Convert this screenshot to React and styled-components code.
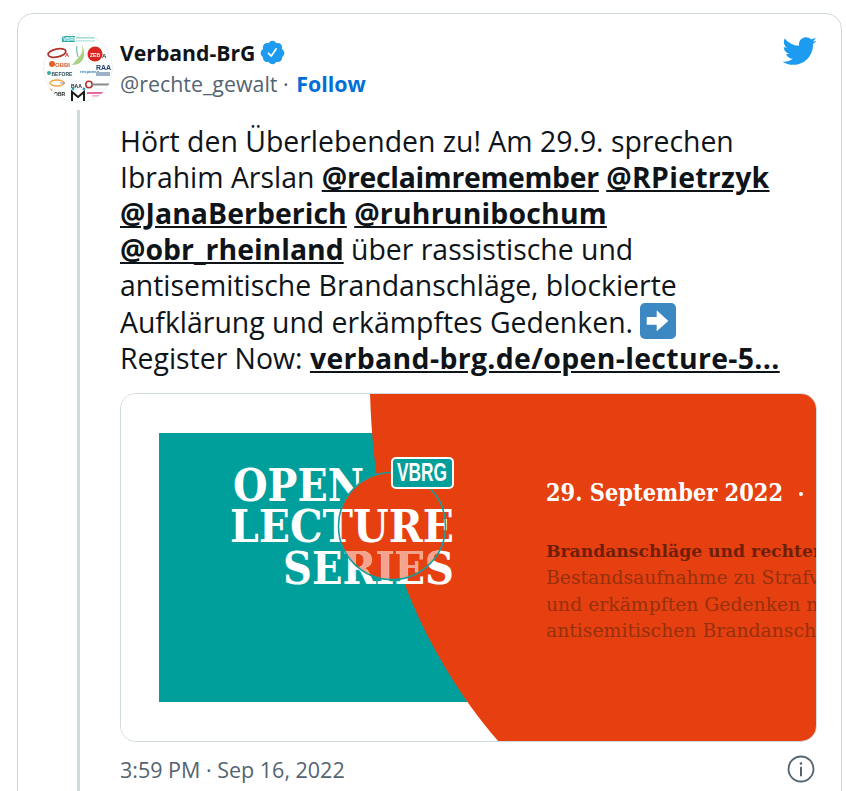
import React from "react";
import styled, { createGlobalStyle } from "styled-components";

const Global = createGlobalStyle`
  html, body { margin: 0; padding: 0; background: #fff; }
  body { width: 846px; height: 791px; overflow: hidden; }
`;

const Card = styled.article`
  box-sizing: border-box;
  width: 825px;
  margin: 13px 0 0 17px;
  height: 800px;
  border: 1px solid #cfd9de;
  border-radius: 16px;
  padding: 19px 24px 0 25px;
  font-family: "Open Sans", "Noto Sans", sans-serif;
  color: #0f1419;
  background: #fff;
`;

const Header = styled.header`
  display: flex;
  align-items: flex-start;
  height: 70px;
`;

const AvatarSvg = styled.svg`
  width: 70px;
  height: 70px;
  flex: none;
  margin-right: 7px;
  filter: blur(0.35px);
`;

const Identity = styled.div`
  flex: 1;
  padding-top: 5px;
`;

const NameRow = styled.div`
  display: flex;
  align-items: center;
  height: 29px;
  gap: 4px;
`;

const Name = styled.span`
  font-size: 21.2px;
  font-weight: 700;
`;

const HandleRow = styled.div`
  font-size: 21.4px;
  line-height: 30px;
  color: #536471;
  margin-top: 2px;
`;

const Follow = styled.span`
  color: #006fd6;
  font-weight: 700;
  margin-left: 2px;
`;

const Bird = styled.svg`
  width: 36px;
  height: 36px;
  fill: #1d9bf0;
  flex: none;
`;

const Body = styled.div`
  display: flex;
`;

const ThreadRail = styled.div`
  flex: none;
  width: 3px;
  margin: 7px 40px 0 34px;
  height: 690px;
  background: #cfd9de;
`;

const Content = styled.div`
  width: 697px;
  padding-top: 20px;
`;

const TweetText = styled.p`
  margin: 0 0 17px;
  font-size: 28.4px;
  line-height: 36px;
  white-space: nowrap;
`;

const Mention = styled.span`
  font-weight: 700;
  letter-spacing: ${(p) => p.$track || "0"};
  text-decoration: underline;
`;

const Emoji = styled.svg`
  width: 36px;
  height: 36px;
  vertical-align: -6px;
`;

const Media = styled.div`
  box-sizing: border-box;
  width: 697px;
  height: 349px;
  border: 1px solid #cfd9de;
  border-radius: 16px;
  overflow: hidden;
  background: #fff;
`;

const Poster = styled.svg`
  display: block;
  width: 697px;
  height: 349px;
  margin: -1px;
`;

const PosterTitle = styled.text`
  font-family: "DejaVu Serif", serif;
  font-weight: 700;
  font-size: 45px;
  fill: ${(p) => p.$fill || "#fff"};
`;

const PosterBadgeText = styled.text`
  font-family: "Liberation Sans", sans-serif;
  font-weight: 700;
  font-size: 25px;
  fill: #fff;
`;

const PosterDate = styled.text`
  font-family: "DejaVu Serif", serif;
  font-weight: 700;
  font-size: 24px;
  fill: #fff;
`;

const PosterLead = styled.text`
  font-family: "DejaVu Serif", serif;
  font-weight: 700;
  font-size: 17.2px;
  fill: #6f1f07;
`;

const PosterLine = styled.text`
  font-family: "DejaVu Serif", serif;
  font-weight: 400;
  font-size: 18.8px;
  fill: #96300e;
`;

const Footer = styled.footer`
  display: flex;
  align-items: center;
  justify-content: space-between;
  height: 30px;
  margin-top: 12px;
  color: #536471;
  font-size: 21.5px;
`;

const InfoIcon = styled.svg`
  width: 30px;
  height: 30px;
  margin-right: 1px;
  fill: none;
  stroke: #536471;
  flex: none;
`;

const Badge = () => (
  <svg width="27" height="27" viewBox="0 0 24 24" fill="#1d9bf0">
    <path d="M22.5 12.5c0-1.58-.875-2.95-2.148-3.6.154-.435.238-.905.238-1.4 0-2.21-1.71-3.998-3.818-3.998-.47 0-.92.084-1.336.25C14.818 2.415 13.51 1.5 12 1.5s-2.816.917-3.437 2.25c-.415-.165-.866-.25-1.336-.25-2.11 0-3.818 1.79-3.818 4 0 .494.083.964.237 1.4-1.272.65-2.147 2.018-2.147 3.6 0 1.495.782 2.798 1.942 3.486-.02.17-.032.34-.032.514 0 2.21 1.708 4 3.818 4 .47 0 .92-.086 1.335-.25.62 1.334 1.926 2.25 3.437 2.25 1.512 0 2.818-.916 3.437-2.25.415.163.865.248 1.336.248 2.11 0 3.818-1.79 3.818-4 0-.174-.012-.344-.033-.513 1.158-.687 1.943-1.99 1.943-3.484zm-6.616-3.334l-4.334 6.5c-.145.217-.382.334-.625.334-.143 0-.288-.04-.416-.126l-.115-.094-2.415-2.415c-.293-.293-.293-.768 0-1.06s.768-.294 1.06 0l1.77 1.767 3.825-5.74c.23-.345.696-.436 1.04-.207.346.23.44.696.21 1.04z" />
  </svg>
);

const Avatar = () => (
  <AvatarSvg viewBox="3 3 70 70">
    <defs>
      <clipPath id="av"><circle cx="38" cy="38" r="35" /></clipPath>
    </defs>
    <g clipPath="url(#av)" fontFamily="Liberation Sans, sans-serif" fontWeight="700">
      <rect x="3" y="3" width="70" height="70" fill="#fff" />
      <circle cx="38" cy="38" r="34.5" fill="#fdfefe" stroke="#e6f1ef" />
      <rect x="22" y="6" width="13" height="6" fill="#37a99f" />
      <text x="23" y="11" fontSize="5" fill="#fff">VBRG</text>
      <rect x="36" y="7" width="19" height="1.6" fill="#a8dcd6" />
      <rect x="36" y="10" width="19" height="1.6" fill="#c5e8e3" />
      <ellipse cx="17" cy="23" rx="9" ry="4" fill="none" stroke="#b1342f" strokeWidth="1.8" transform="rotate(-12 17 23)" />
      <text x="25" y="27" fontSize="5.5" fill="#b33">A</text>
      <path d="M42 14c1 8 0 10-4 14l-6 7c6 0 11-3 12-9 .5-3-.5-8-2-12z" fill="#a9d281" />
      <path d="M37 16c-1 4 0 7 1 11" stroke="#72bfa6" fill="none" strokeWidth="1.2" />
      <circle cx="55" cy="24" r="7.5" fill="#d9241f" />
      <text x="50" y="27" fontSize="5" fill="#fff">ZEB</text>
      <text x="62" y="27.5" fontSize="6" fill="#333">A</text>
      <circle cx="12" cy="34" r="3" fill="#e3622a" />
      <text x="15" y="37" fontSize="6" fill="#d85d2c">OBBI</text>
      <circle cx="9" cy="43" r="2" fill="#37a99f" />
      <text x="11.5" y="45.5" fontSize="5" fill="#2f4c58">BEFORE</text>
      <text x="40" y="42.5" fontSize="4.3" fill="#2e83b4">response.</text>
      <text x="56" y="40" fontSize="7" fill="#23406e">RAA</text>
      <rect x="56" y="42" width="14" height="4" fill="#9db1c7" />
      <ellipse cx="17" cy="53" rx="7" ry="3" fill="none" stroke="#eda64c" strokeWidth="1.5" />
      <text x="20" y="54" fontSize="3" fill="#999">rme</text>
      <text x="31" y="58" fontSize="5" fill="#222">BAA</text>
      <circle cx="49" cy="54.5" r="3.2" fill="none" stroke="#b8352f" strokeWidth="1.6" />
      <rect x="52" y="53.5" width="18" height="2" fill="#8a8a8a" />
      <text x="14" y="66" fontSize="5" fill="#222">OBR</text>
      <circle cx="11" cy="60" r="1.5" fill="#f0a14a" />
      <path d="M32 71v-9l6 5 6-5v9" fill="none" stroke="#1a1a1a" strokeWidth="2" />
      <circle cx="33" cy="59" r="1.4" fill="#2d9cc7" />
      <circle cx="44" cy="59" r="1.4" fill="#2d9cc7" />
      <rect x="47" y="62" width="18" height="2" fill="#e46aa6" />
      <rect x="52" y="65" width="8" height="1.6" fill="#f0a9cb" />
    </g>
  </AvatarSvg>
);

const ArrowEmoji = () => (
  <Emoji viewBox="0 0 36 36">
    <rect width="36" height="36" rx="5" fill="#3b88c3" />
    <path d="M6.7 14H16.7V7.3L28.3 18 16.7 28.3V21.7H6.7Z" fill="#fff" />
  </Emoji>
);

const PosterArt = () => (
  <Poster viewBox="0 0 697 349">
    <defs>
      <clipPath id="ring"><circle cx="272" cy="133" r="53" /></clipPath>
    </defs>
    <rect width="697" height="349" fill="#fff" />
    <rect x="39" y="40" width="340" height="269" fill="#009f9b" />
    <path d="M250 0C252 70 262 135 285 192C305 245 340 305 379 349H697V0Z" fill="#e64010" />
    <PosterTitle x="113" y="108" textLength="131" lengthAdjust="spacingAndGlyphs">OPEN</PosterTitle>
    <circle cx="272" cy="133" r="53.5" fill="#e64010" />
    <PosterTitle x="110" y="149" textLength="224" lengthAdjust="spacingAndGlyphs">LECTURE</PosterTitle>
    <PosterTitle x="163" y="191" textLength="171" lengthAdjust="spacingAndGlyphs">SERIES</PosterTitle>
    <PosterTitle $fill="#f4a48e" x="163" y="191" textLength="171" lengthAdjust="spacingAndGlyphs" clipPath="url(#ring)">SERIES</PosterTitle>
    <circle cx="272" cy="133" r="53.5" fill="none" stroke="#1b9c98" strokeWidth="1.6" />
    <rect x="272" y="65" width="61" height="30" rx="4" fill="#009f9b" stroke="#fff" strokeWidth="2" />
    <PosterBadgeText x="277" y="88" textLength="50" lengthAdjust="spacingAndGlyphs">VBRG</PosterBadgeText>
    <PosterDate x="426" y="108" textLength="237" lengthAdjust="spacingAndGlyphs">29. September 2022</PosterDate>
    <circle cx="681" cy="101" r="2" fill="#fff" />
    <PosterLead x="426" y="164">Brandanschläge und rechter Terror</PosterLead>
    <PosterLine x="426" y="191">Bestandsaufnahme zu Strafverfahren</PosterLine>
    <PosterLine x="426" y="218">und erkämpften Gedenken nach</PosterLine>
    <PosterLine x="426" y="244">antisemitischen Brandanschlägen</PosterLine>
  </Poster>
);

export default function App() {
  return (
    <>
      <Global />
      <Card>
        <Header>
          <Avatar />
          <Identity>
            <NameRow>
              <Name>Verband-BrG</Name>
              <Badge />
            </NameRow>
            <HandleRow>
              @rechte_gewalt · <Follow>Follow</Follow>
            </HandleRow>
          </Identity>
          <Bird viewBox="0 0 24 24">
            <path d="M23.643 4.937c-.835.37-1.732.62-2.676.76.962-.576 1.7-1.49 2.048-2.578-.9.534-1.897.922-2.958 1.13-.85-.904-2.06-1.47-3.4-1.47-2.572 0-4.658 2.086-4.658 4.66 0 .364.042.718.12 1.06-3.873-.195-7.304-2.05-9.602-4.868-.4.69-.63 1.49-.63 2.342 0 1.616.823 3.043 2.072 3.878-.764-.025-1.482-.234-2.11-.583v.06c0 2.257 1.605 4.14 3.737 4.568-.392.106-.803.162-1.227.162-.3 0-.593-.028-.877-.082.593 1.85 2.313 3.198 4.352 3.234-1.595 1.25-3.604 1.995-5.786 1.995-.376 0-.747-.022-1.112-.065 2.062 1.323 4.51 2.093 7.14 2.093 8.57 0 13.255-7.098 13.255-13.254 0-.2 0-.402-.014-.602.91-.658 1.7-1.477 2.323-2.41z" />
          </Bird>
        </Header>
        <Body>
          <ThreadRail />
          <Content>
            <TweetText>
              Hört den Überlebenden zu! Am 29.9. sprechen<br />
              Ibrahim Arslan <Mention $track="-0.3px">@reclaimremember</Mention> <Mention $track="0.3px">@RPietrzyk</Mention><br />
              <Mention $track="0.05px">@JanaBerberich</Mention> <Mention $track="0.2px">@ruhrunibochum</Mention><br />
              <Mention>@obr_rheinland</Mention> über rassistische und<br />
              antisemitische Brandanschläge, blockierte<br />
              Aufklärung und erkämpftes Gedenken. <ArrowEmoji /><br />
              Register Now: <Mention $track="0.35px">verband-brg.de/open-lecture-5...</Mention>
            </TweetText>
            <Media>
              <PosterArt />
            </Media>
            <Footer>
              <span>3:59 PM · Sep 16, 2022</span>
              <InfoIcon viewBox="0 0 30 30">
                <circle cx="15" cy="15" r="12.5" strokeWidth="1.8" />
                <path d="M15 13.5v8" strokeWidth="2" strokeLinecap="round" />
                <circle cx="15" cy="9.5" r="1.3" fill="#536471" stroke="none" />
              </InfoIcon>
            </Footer>
          </Content>
        </Body>
      </Card>
    </>
  );
}
